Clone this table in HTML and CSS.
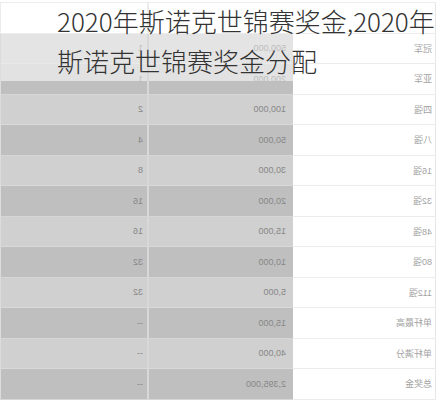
FILE: index.html
```html
<!DOCTYPE html>
<html lang="zh">
<head>
<meta charset="utf-8">
<title>2020年斯诺克世锦赛奖金</title>
<link rel="stylesheet" href="styles.css">
</head>
<body>
<div class="page">
  <div class="sheet">
    <div class="row head"><div class="c name"></div><div class="c prize"></div><div class="c count"></div></div>
    <div class="row top"><div class="c name">冠军</div><div class="c prize">500,000</div><div class="c count">1</div></div>
    <div class="row mix"><div class="c name">亚军</div><div class="c prize">200,000</div><div class="c count">1</div></div>
    <div class="row lt"><div class="c name">四强</div><div class="c prize">100,000</div><div class="c count">2</div></div>
    <div class="row dk"><div class="c name">八强</div><div class="c prize">50,000</div><div class="c count">4</div></div>
    <div class="row lt"><div class="c name">16强</div><div class="c prize">30,000</div><div class="c count">8</div></div>
    <div class="row dk"><div class="c name">32强</div><div class="c prize">20,000</div><div class="c count">16</div></div>
    <div class="row lt"><div class="c name">48强</div><div class="c prize">15,000</div><div class="c count">16</div></div>
    <div class="row dk"><div class="c name">80强</div><div class="c prize">10,000</div><div class="c count">32</div></div>
    <div class="row lt"><div class="c name">112强</div><div class="c prize">5,000</div><div class="c count">32</div></div>
    <div class="row dk"><div class="c name">单杆最高</div><div class="c prize">15,000</div><div class="c count">--</div></div>
    <div class="row lt"><div class="c name">单杆满分</div><div class="c prize">40,000</div><div class="c count">--</div></div>
    <div class="row dk"><div class="c name">总奖金</div><div class="c prize">2,395,000</div><div class="c count">--</div></div>
  </div>
  <h1 class="title">2020年斯诺克世锦赛奖金,2020年斯诺克世锦赛奖金分配</h1>
</div>
</body>
</html>
```

FILE: styles.css
```css
html, body {
  margin: 0;
  padding: 0;
  background: #ffffff;
}

.page {
  position: relative;
  width: 442px;
  height: 400px;
  overflow: hidden;
}

.sheet {
  width: 436px;
  margin-top: 2px;
  display: flex;
  flex-direction: column;
  border-top: 1px solid #ececec;
  transform: scaleX(-1);
  font-family: "Liberation Sans", "Noto Sans CJK SC", sans-serif;
  font-size: 9px;
}

.row {
  display: grid;
  grid-template-columns: 143px 146px 147px;
  height: 30.5px;
}

.c {
  display: flex;
  align-items: center;
  box-sizing: border-box;
  border-bottom: 1px solid #ececec;
  white-space: nowrap;
}

.name {
  padding-left: 3px;
  border-left: 1px solid #e6e6e6;
  color: #a3a3a3;
  background: #ffffff;
}

.prize {
  padding-left: 7px;
  color: #878787;
}

.count {
  padding-left: 4px;
  color: #878787;
  border-right: 1px solid #dcdcdc;
}

.row .prize {
  border-right: 2px solid #d8d8d8;
}

.head .prize,
.head .count {
  background: #ffffff;
  border-right-color: #ececec;
}

.top .prize,
.top .count {
  background: #e4e4e4;
  border-bottom-color: #e9e9e9;
  color: #bdbdbd;
}

.mix .prize,
.mix .count {
  background: linear-gradient(to bottom, #e2e2e2 0, #e2e2e2 17px, #bfbfbf 17px);
  border-bottom-color: #d6d6d6;
  color: #bdbdbd;
}

.lt .prize,
.lt .count {
  background: #d0d0d0;
  border-bottom-color: #d9d9d9;
}

.dk .prize,
.dk .count {
  background: #bfbfbf;
  border-bottom-color: #d6d6d6;
}

.title {
  position: absolute;
  top: 1px;
  left: 57px;
  right: 0;
  margin: 0;
  font-family: "Noto Sans CJK SC", "Noto Sans", sans-serif;
  font-size: 26px;
  font-weight: 300;
  line-height: 40px;
  color: #333333;
}
```
